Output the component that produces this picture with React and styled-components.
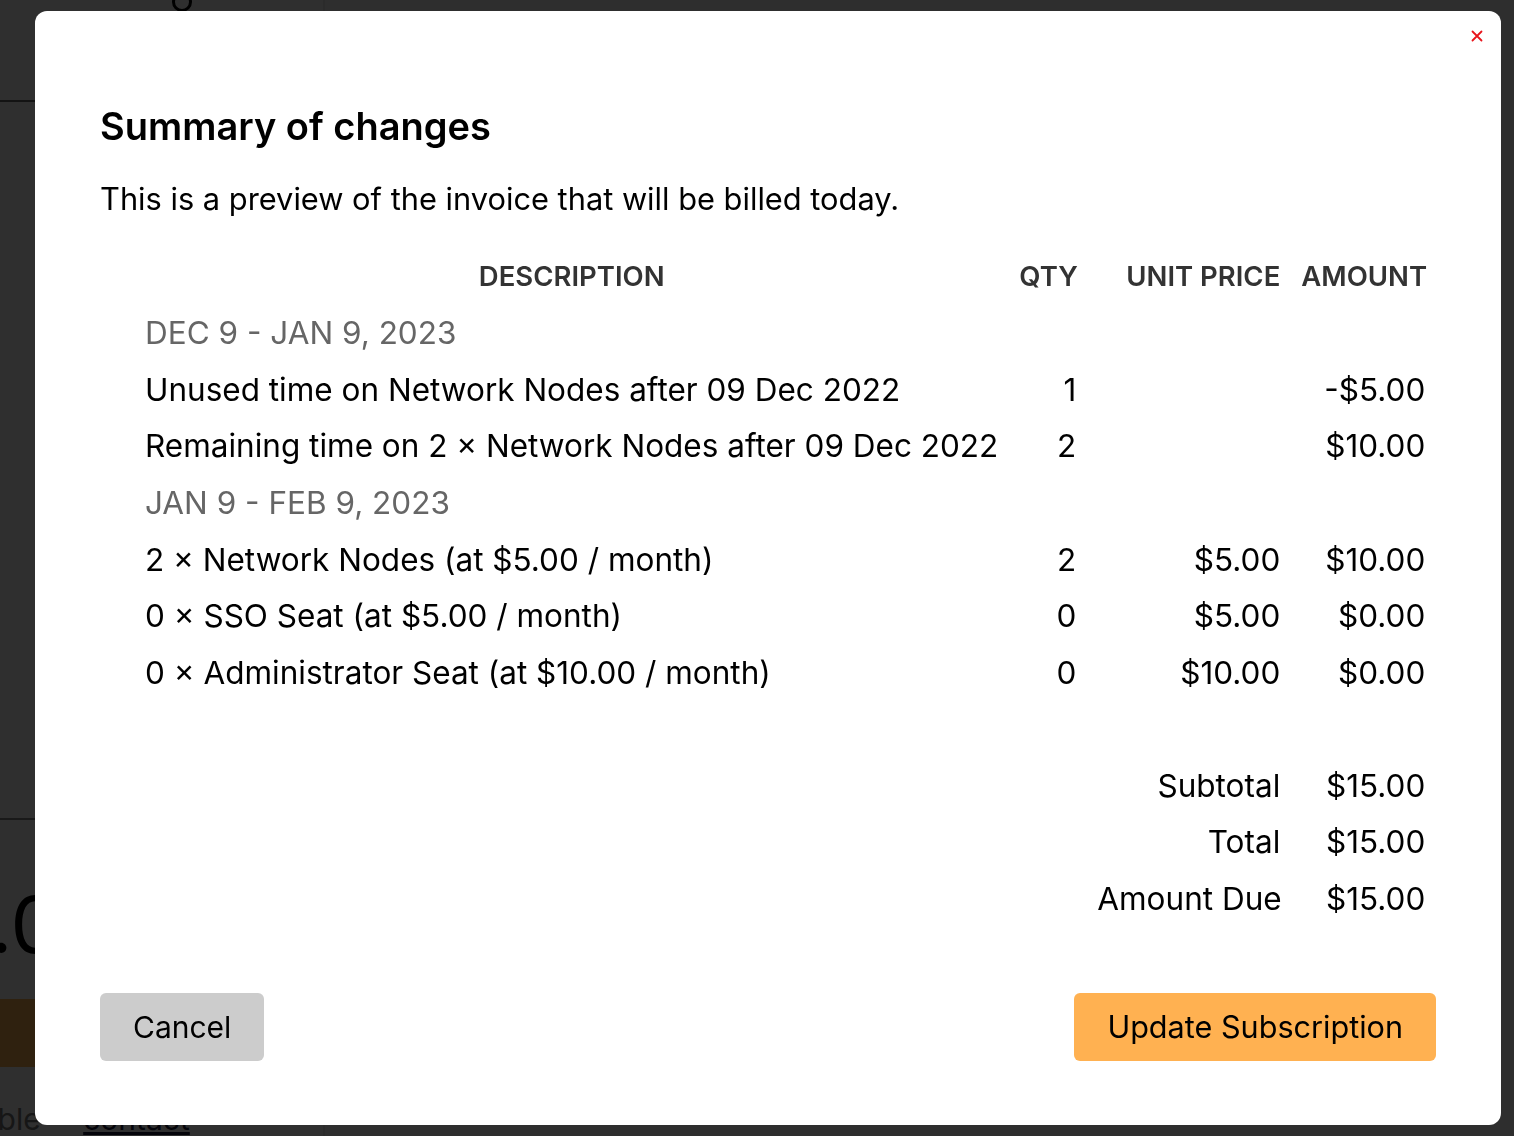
import React from "react";
import styled, { createGlobalStyle } from "styled-components";

const GlobalStyle = createGlobalStyle`
    html, body {
        margin: 0;
        padding: 0;
        height: 100%;
        overflow: hidden;
    }
    body {
        font-family: Inter, "Noto Sans", "Liberation Sans", sans-serif;
        color: #000;
        background: #fff;
    }
`;

// the page sitting behind the modal
const Page = styled.div`
    height: 100vh;
    display: grid;
    grid-template-columns: 325px 1fr;
    background: #fff;
`;

const Sidebar = styled.div`
    display: flex;
    flex-direction: column;
    border-right: 2px solid #e6e6e6;
    overflow: hidden;
`;

const SideTop = styled.div`
    height: 100px;
    flex-shrink: 0;
    border-bottom: 2px solid #666;
    display: flex;
    padding-left: 171px;
    & svg {
        margin-top: -9px;
    }
`;

const SideSpacer = styled.div`
    height: 716px;
    flex-shrink: 0;
    border-bottom: 2px solid #888;
`;

const BigPrice = styled.div`
    font-size: 78px;
    line-height: 78px;
    margin: 66px 0 0 -137px;
    white-space: nowrap;
`;

const SideButton = styled.div`
    margin-top: 35px;
    height: 68px;
    flex-shrink: 0;
    background: #ffb151;
`;

const SideFoot = styled.div`
    margin-top: 34px;
    font-size: 30px;
    white-space: nowrap;
    margin-left: -86px;
    color: #777;
    & a {
        margin-left: 34px;
        color: #1a1a3a;
        text-decoration: underline;
    }
`;

const Main = styled.div`
    background: #fafafa;
`;

// overlay + modal
const Overlay = styled.div`
    position: fixed;
    inset: 0;
    background: rgba(0, 0, 0, 0.815);
    display: flex;
    align-items: flex-start;
    padding: 11px 0 0 35px;
`;

const Modal = styled.div`
    width: 1466px;
    background: #fff;
    border-radius: 12px;
    display: flex;
    flex-direction: column;
`;

const CloseRow = styled.div`
    display: flex;
    justify-content: flex-end;
    padding: 18px 17px 0 0;
    height: 34px;
`;

const CloseButton = styled.button`
    border: none;
    background: none;
    padding: 0;
    width: 14px;
    height: 14px;
    cursor: pointer;
    display: flex;
    align-items: center;
    justify-content: center;
`;

const Body = styled.div`
    padding: 0 65px 64px 65px;
`;

const Title = styled.h2`
    margin: 41px 0 0;
    font-size: 38px;
    line-height: 44px;
    font-weight: 600;
`;

const Lead = styled.p`
    margin: 33px 0 0;
    font-size: 30.8px;
    line-height: 36px;
`;

const InvoiceGrid = styled.div`
    margin-top: 31px;
    display: grid;
    grid-template-columns: 1fr 57px 183px 124px;
    grid-auto-rows: 56.55px;
    column-gap: 21px;
    align-items: center;
    padding: 0 12px 0 45px;
    font-size: 31.5px;
`;

const Cell = styled.div`
    text-align: ${(p) => p.$align || "left"};
    white-space: nowrap;
    grid-column: ${(p) => p.$col || "auto"};
`;

const HeadCell = styled(Cell)`
    font-size: 27.5px;
    font-weight: 600;
    color: #333;
`;

const PeriodCell = styled(Cell)`
    grid-column: 1 / -1;
    color: #666;
`;

const Footer = styled.div`
    margin-top: 66px;
    display: flex;
    justify-content: space-between;
`;

const Button = styled.button`
    height: 68px;
    border: none;
    border-radius: 6px;
    padding: 0 33px;
    font-family: inherit;
    font-size: ${(p) => (p.$primary ? "30.6px" : "30px")};
    color: #000;
    background: ${(p) => (p.$primary ? "#ffb151" : "#cccccc")};
    cursor: pointer;
`;

const periods = [
    {
        label: "DEC 9 - JAN 9, 2023",
        lines: [
            { desc: "Unused time on Network Nodes after 09 Dec 2022", qty: "1", unit: "", amount: "-$5.00" },
            { desc: "Remaining time on 2 × Network Nodes after 09 Dec 2022", qty: "2", unit: "", amount: "$10.00" },
        ],
    },
    {
        label: "JAN 9 - FEB 9, 2023",
        lines: [
            { desc: "2 × Network Nodes (at $5.00 / month)", qty: "2", unit: "$5.00", amount: "$10.00" },
            { desc: "0 × SSO Seat (at $5.00 / month)", qty: "0", unit: "$5.00", amount: "$0.00" },
            { desc: "0 × Administrator Seat (at $10.00 / month)", qty: "0", unit: "$10.00", amount: "$0.00" },
        ],
    },
];

const totals = [
    { label: "Subtotal", value: "$15.00" },
    { label: "Total", value: "$15.00" },
    { label: "Amount Due", value: "$15.00" },
];

const App = () => {
    return (
        <>
            <GlobalStyle />
            <Page>
                <Sidebar>
                    <SideTop>
                        <svg width="22" height="22" viewBox="0 0 22 22">
                            <circle cx="11" cy="11" r="8.5" fill="none" stroke="#000" strokeWidth="3" />
                        </svg>
                    </SideTop>
                    <SideSpacer />
                    <BigPrice>$15.00</BigPrice>
                    <SideButton />
                    <SideFoot>
                        Available <a>contact</a>
                    </SideFoot>
                </Sidebar>
                <Main />
            </Page>

            <Overlay>
                <Modal>
                    <CloseRow>
                        <CloseButton aria-label="Close">
                            <svg width="12" height="12" viewBox="0 0 12 12">
                                <path d="M1.5 1.5 L10.5 10.5 M10.5 1.5 L1.5 10.5" stroke="#e8141b" strokeWidth="1.8" strokeLinecap="round" />
                            </svg>
                        </CloseButton>
                    </CloseRow>
                    <Body>
                        <Title>Summary of changes</Title>
                        <Lead>This is a preview of the invoice that will be billed today.</Lead>

                        <InvoiceGrid>
                            <HeadCell $align="center">DESCRIPTION</HeadCell>
                            <HeadCell $align="right">QTY</HeadCell>
                            <HeadCell $align="right">UNIT PRICE</HeadCell>
                            <HeadCell $align="right">AMOUNT</HeadCell>

                            {periods.map((period) => (
                                <React.Fragment key={period.label}>
                                    <PeriodCell>{period.label}</PeriodCell>
                                    {period.lines.map((line) => (
                                        <React.Fragment key={line.desc}>
                                            <Cell>{line.desc}</Cell>
                                            <Cell $align="right">{line.qty}</Cell>
                                            <Cell $align="right">{line.unit}</Cell>
                                            <Cell $align="right">{line.amount}</Cell>
                                        </React.Fragment>
                                    ))}
                                </React.Fragment>
                            ))}

                            <Cell $col="1 / -1" />

                            {totals.map((t) => (
                                <React.Fragment key={t.label}>
                                    <Cell $col="3" $align="right">{t.label}</Cell>
                                    <Cell $align="right">{t.value}</Cell>
                                </React.Fragment>
                            ))}
                        </InvoiceGrid>

                        <Footer>
                            <Button>Cancel</Button>
                            <Button $primary>Update Subscription</Button>
                        </Footer>
                    </Body>
                </Modal>
            </Overlay>
        </>
    );
};

export default App;
